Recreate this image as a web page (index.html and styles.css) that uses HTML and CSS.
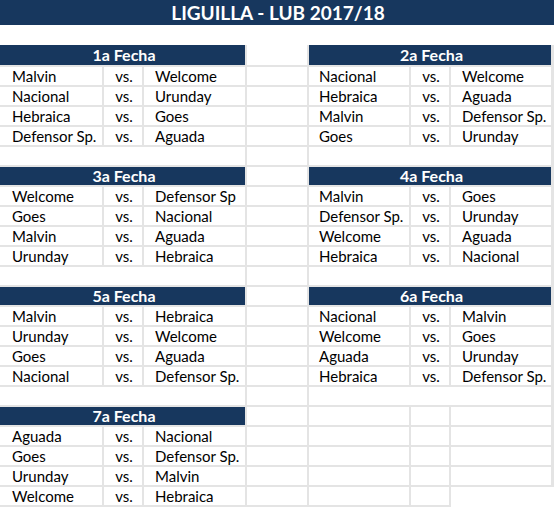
FILE: index.html
```
<!DOCTYPE html>
<html>
<head>
<meta charset="utf-8">
<link rel="stylesheet" href="styles.css">
</head>
<body>
<div class="sheet">
  <div class="title">LIGUILLA - LUB 2017/18</div>
  <div class="blank-top"></div>

  <div class="hd hd-l first">1a Fecha</div>
  <div class="cell sp first"></div>
  <div class="hd hd-r first">2a Fecha</div>

  <div class="cell a">Malvin</div><div class="cell b">vs.</div><div class="cell c">Welcome</div>
  <div class="cell sp"></div>
  <div class="cell e">Nacional</div><div class="cell b">vs.</div><div class="cell g">Welcome</div>

  <div class="cell a">Nacional</div><div class="cell b">vs.</div><div class="cell c">Urunday</div>
  <div class="cell sp"></div>
  <div class="cell e">Hebraica</div><div class="cell b">vs.</div><div class="cell g">Aguada</div>

  <div class="cell a">Hebraica</div><div class="cell b">vs.</div><div class="cell c">Goes</div>
  <div class="cell sp"></div>
  <div class="cell e">Malvin</div><div class="cell b">vs.</div><div class="cell g">Defensor Sp.</div>

  <div class="cell a">Defensor Sp.</div><div class="cell b">vs.</div><div class="cell c">Aguada</div>
  <div class="cell sp"></div>
  <div class="cell e">Goes</div><div class="cell b">vs.</div><div class="cell g">Urunday</div>

  <div class="cell blank-l"></div><div class="cell sp"></div><div class="cell blank-r"></div>

  <div class="hd hd-l">3a Fecha</div>
  <div class="cell sp"></div>
  <div class="hd hd-r">4a Fecha</div>

  <div class="cell a">Welcome</div><div class="cell b">vs.</div><div class="cell c">Defensor Sp</div>
  <div class="cell sp"></div>
  <div class="cell e">Malvin</div><div class="cell b">vs.</div><div class="cell g">Goes</div>

  <div class="cell a">Goes</div><div class="cell b">vs.</div><div class="cell c">Nacional</div>
  <div class="cell sp"></div>
  <div class="cell e">Defensor Sp.</div><div class="cell b">vs.</div><div class="cell g">Urunday</div>

  <div class="cell a">Malvin</div><div class="cell b">vs.</div><div class="cell c">Aguada</div>
  <div class="cell sp"></div>
  <div class="cell e">Welcome</div><div class="cell b">vs.</div><div class="cell g">Aguada</div>

  <div class="cell a">Urunday</div><div class="cell b">vs.</div><div class="cell c">Hebraica</div>
  <div class="cell sp"></div>
  <div class="cell e">Hebraica</div><div class="cell b">vs.</div><div class="cell g">Nacional</div>

  <div class="cell blank-l"></div><div class="cell sp"></div><div class="cell blank-r"></div>

  <div class="hd hd-l">5a Fecha</div>
  <div class="cell sp"></div>
  <div class="hd hd-r">6a Fecha</div>

  <div class="cell a">Malvin</div><div class="cell b">vs.</div><div class="cell c">Hebraica</div>
  <div class="cell sp"></div>
  <div class="cell e">Nacional</div><div class="cell b">vs.</div><div class="cell g">Malvin</div>

  <div class="cell a">Urunday</div><div class="cell b">vs.</div><div class="cell c">Welcome</div>
  <div class="cell sp"></div>
  <div class="cell e">Welcome</div><div class="cell b">vs.</div><div class="cell g">Goes</div>

  <div class="cell a">Goes</div><div class="cell b">vs.</div><div class="cell c">Aguada</div>
  <div class="cell sp"></div>
  <div class="cell e">Aguada</div><div class="cell b">vs.</div><div class="cell g">Urunday</div>

  <div class="cell a">Nacional</div><div class="cell b">vs.</div><div class="cell c">Defensor Sp.</div>
  <div class="cell sp"></div>
  <div class="cell e">Hebraica</div><div class="cell b">vs.</div><div class="cell g">Defensor Sp.</div>

  <div class="cell blank-l"></div><div class="cell sp"></div><div class="cell blank-r"></div>

  <div class="hd hd-l">7a Fecha</div>
  <div class="cell sp"></div>
  <div class="cell e"></div><div class="cell b"></div><div class="cell g"></div>

  <div class="cell a">Aguada</div><div class="cell b">vs.</div><div class="cell c">Nacional</div>
  <div class="cell sp"></div>
  <div class="cell e"></div><div class="cell b"></div><div class="cell g"></div>

  <div class="cell a">Goes</div><div class="cell b">vs.</div><div class="cell c">Defensor Sp.</div>
  <div class="cell sp"></div>
  <div class="cell e"></div><div class="cell b"></div><div class="cell g"></div>

  <div class="cell a">Urunday</div><div class="cell b">vs.</div><div class="cell c">Malvin</div>
  <div class="cell sp"></div>
  <div class="cell e"></div><div class="cell b"></div><div class="cell g"></div>

  <div class="cell a last">Welcome</div><div class="cell b last">vs.</div><div class="cell c last">Hebraica</div>
  <div class="cell sp last"></div>
  <div class="cell e last"></div><div class="cell b last"></div><div class="cell g last corner"></div>
</div>
</body>
</html>
```
FILE: styles.css
```
html, body {
  margin: 0;
  padding: 0;
  background: #ffffff;
}

.sheet {
  display: grid;
  grid-template-columns: 102px 40px 103px 62px 102px 40px 105px;
  grid-template-rows: 25px repeat(23, 20px) 22px;
  width: 554px;
  font-family: Lato, "Open Sans", sans-serif;
  font-size: 15px;
  color: #000000;
  background: #ffffff;
}

.title {
  grid-column: 1 / -1;
  background: #17375e;
  color: #ffffff;
  font-weight: bold;
  font-size: 19px;
  line-height: 25px;
  text-align: center;
  text-indent: 2px;
}

.blank-top {
  grid-column: 1 / -1;
  background: #ffffff;
}

.cell {
  box-sizing: border-box;
  border-top: 2px solid #e4e4e4;
  border-left: 2px solid #e4e4e4;
  line-height: 18px;
  white-space: nowrap;
  overflow: hidden;
  padding-left: 10px;
}

.cell.a {
  border-left: none;
  padding-left: 12px;
}

.cell.c {
  padding-left: 11px;
}

.cell.b {
  padding-left: 2px;
  text-align: center;
}

.cell.g {
  padding-left: 11px;
  border-right: 3px solid #e4e4e4;
}

.cell.sp.first {
  border-top: none;
}

.cell.blank-l {
  grid-column: span 3;
  border-left: none;
}

.cell.blank-r {
  grid-column: span 3;
  border-right: 3px solid #e4e4e4;
}

.hd {
  box-sizing: border-box;
  grid-column: span 3;
  background: #17375e;
  color: #ffffff;
  font-weight: bold;
  font-size: 16px;
  text-align: center;
  text-indent: 3px;
  line-height: 18px;
  border-top: 2px solid #e4e4e4;
}

.hd.first {
  border-top: none;
  line-height: 20px;
}

.hd-r {
  border-left: 2px solid #e4e4e4;
  border-right: 3px solid #e4e4e4;
}

.cell.last {
  border-bottom: 2px solid #e4e4e4;
}

.cell.corner {
  border-right: none;
  border-bottom: none;
}
```
